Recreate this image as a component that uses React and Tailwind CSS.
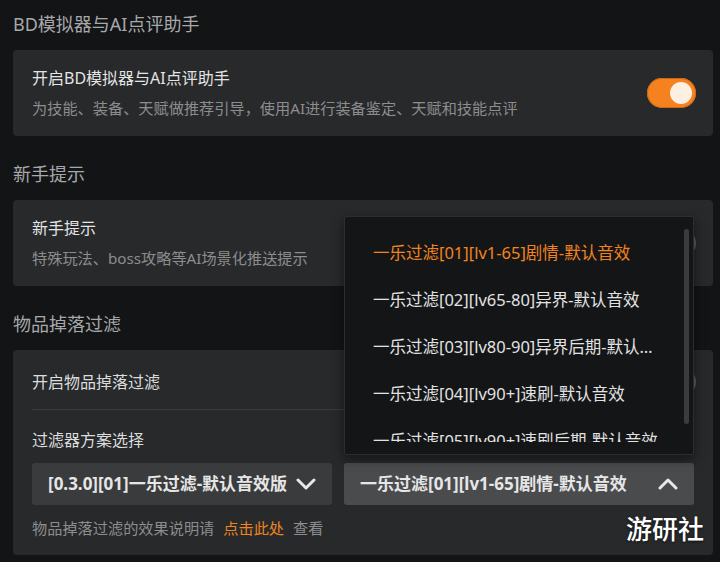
import { useState } from 'react';

const options = [
  '一乐过滤[01][lv1-65]剧情-默认音效',
  '一乐过滤[02][lv65-80]异界-默认音效',
  '一乐过滤[03][lv80-90]异界后期-默认音效',
  '一乐过滤[04][lv90+]速刷-默认音效',
  '一乐过滤[05][lv90+]速刷后期-默认音效',
];

function Toggle({ on }) {
  return (
    <div
      className={`flex h-[30px] w-[49px] shrink-0 items-center rounded-full px-[4px] ${
        on ? 'justify-end bg-[#f5821f] shadow-[inset_0_0_0_1px_#c86a1a]' : 'justify-start bg-[#5c5d60]'
      }`}
    >
      <span className={`h-[22px] w-[22px] rounded-full ${on ? 'bg-[#fdf0e3]' : 'bg-[#cfcfcf]'}`} />
    </div>
  );
}

function Chevron({ up }) {
  return (
    <svg width="20" height="12" viewBox="0 0 20 12" className="shrink-0">
      <polyline
        points={up ? '2,10 10,2 18,10' : '2,2 10,10 18,2'}
        fill="none"
        stroke="#e8e8e8"
        strokeWidth="3"
        strokeLinecap="round"
        strokeLinejoin="round"
      />
    </svg>
  );
}

function Heading({ children, className = '' }) {
  return <h2 className={`text-[18px] leading-[24px] text-[#a7a8aa] ${className}`}>{children}</h2>;
}

function SwitchCard({ title, desc, on }) {
  return (
    <div className="mt-[14px] flex items-center justify-between rounded-[4px] bg-[#28292b] py-[17px] pl-[19px] pr-[17px]">
      <div>
        <p className="text-[16px] leading-[22px] text-[#e4e4e4]">{title}</p>
        <p className="mt-[8px] text-[15.2px] leading-[22px] text-[#8c8d8f]">{desc}</p>
      </div>
      <Toggle on={on} />
    </div>
  );
}

export default function App() {
  const [selected, setSelected] = useState(0);

  return (
    <div className="relative h-[562px] w-[720px] overflow-hidden bg-[#131416] pl-[13px] pt-[12px] font-['Noto_Sans','Noto_Sans_CJK_SC',sans-serif]">
      <div className="w-[700px]">
        <Heading>BD模拟器与AI点评助手</Heading>
        <SwitchCard
          title="开启BD模拟器与AI点评助手"
          desc="为技能、装备、天赋做推荐引导，使用AI进行装备鉴定、天赋和技能点评"
          on
        />

        <Heading className="mt-[26px]">新手提示</Heading>
        <SwitchCard title="新手提示" desc="特殊玩法、boss攻略等AI场景化推送提示" />

        <Heading className="mt-[26px]">物品掉落过滤</Heading>
        <div className="mt-[14px] rounded-[4px] bg-[#28292b] px-[19px] pb-[16px]">
          <div className="flex h-[60px] items-center justify-between border-b border-[#3b3c3e] pt-[4px]">
            <p className="text-[16px] leading-[22px] text-[#dcdcdc]">开启物品掉落过滤</p>
            <div className="mr-[-2px]">
              <Toggle />
            </div>
          </div>
          <p className="mt-[19px] text-[16px] leading-[22px] text-[#dcdcdc]">过滤器方案选择</p>
          <div className="mt-[12px] flex gap-[12px]">
            <div className="flex h-[42px] w-[300px] items-center justify-between rounded-[3px] bg-[#3a3b3d] pl-[16px] pr-[16px]">
              <span className="whitespace-nowrap text-[17px] font-bold text-[#e6e6e6]">[0.3.0][01]一乐过滤-默认音效版</span>
              <Chevron />
            </div>
            <div className="relative">
              <div className="flex h-[42px] w-[350px] items-center justify-between rounded-[3px] bg-[#4a4b4d] pl-[16px] pr-[16px]">
                <span className="whitespace-nowrap text-[17px] font-bold text-[#e6e6e6]">{options[selected]}</span>
                <Chevron up />
              </div>
              <div className="absolute bottom-[50px] left-0 z-10 w-[350px] rounded-[2px] border border-[#2c2d2f] bg-[#141517] py-[12px] shadow-[0_4px_12px_rgba(0,0,0,0.5)]">
                <div className="h-[213px] overflow-hidden">
                  {options.map((opt, i) => (
                    <button
                      key={opt}
                      type="button"
                      onClick={() => setSelected(i)}
                      className={`block h-[47px] w-full truncate px-[28px] text-left text-[16.5px] leading-[47px] ${
                        i === selected ? 'text-[#f2841f]' : 'text-[#e2e2e2]'
                      }`}
                    >
                      {opt}
                    </button>
                  ))}
                </div>
                <div className="absolute right-[4px] top-[12px] h-[195px] w-[5px] rounded-full bg-[#3b3c3e]" />
              </div>
            </div>
          </div>
          <p className="mt-[12px] text-[15.2px] leading-[22px] text-[#8c8d8f]">
            物品掉落过滤的效果说明请
            <span className="mx-[9px] text-[#ee8620]">点击此处</span>
            查看
          </p>
        </div>
      </div>

      <div className="absolute left-[626px] top-[512px] text-[26px] font-medium leading-[34px] text-white [text-shadow:0_1px_3px_rgba(0,0,0,0.6)]">
        游研社
      </div>
    </div>
  );
}
